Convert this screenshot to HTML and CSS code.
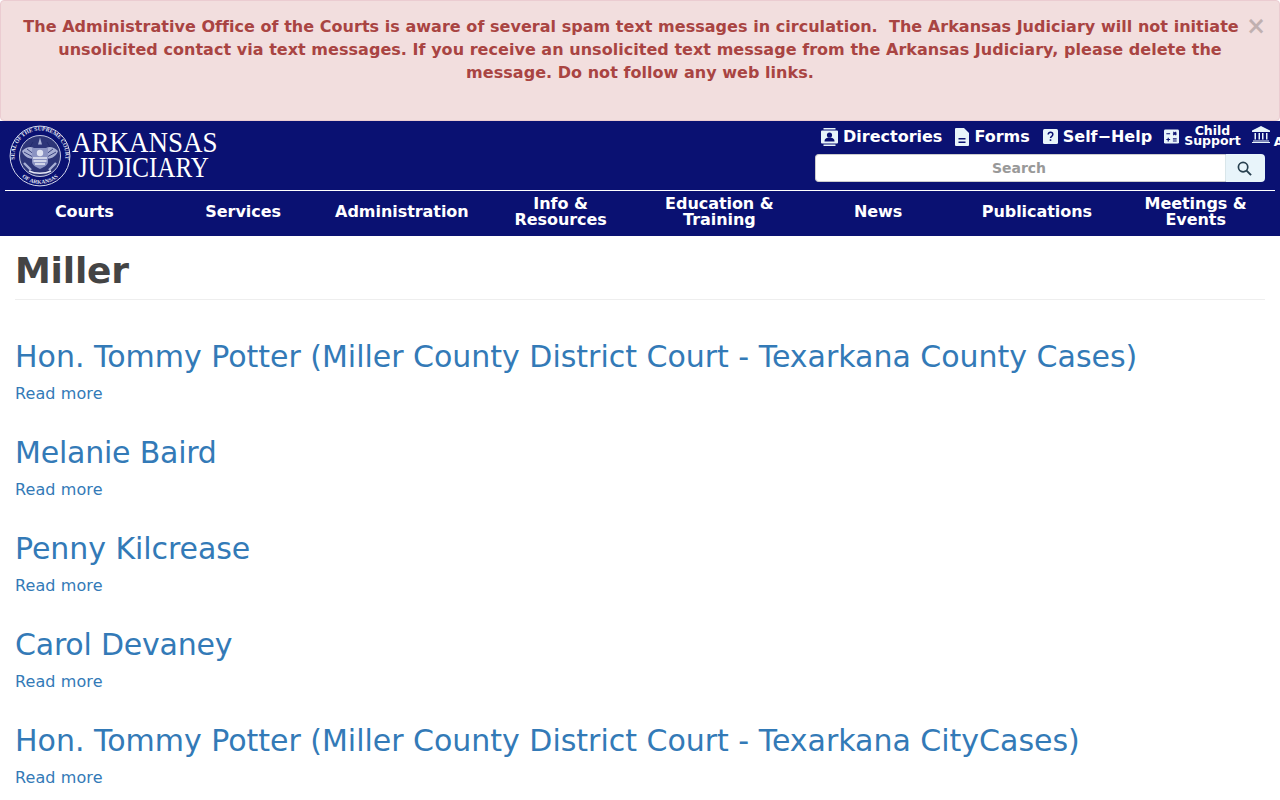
FILE: index.html
```html
<!DOCTYPE html>
<html lang="en">
<head>
<meta charset="utf-8">
<title>Miller | Arkansas Judiciary</title>
<link rel="stylesheet" href="styles.css">
</head>
<body>
<div class="alert">
  <button class="close" type="button">×</button>
  <p>The Administrative Office of the Courts is aware of several spam text messages in circulation.&nbsp; The Arkansas Judiciary will not initiate unsolicited contact via text messages. If you receive an unsolicited text message from the Arkansas Judiciary, please delete the message. Do not follow any web links.</p>
</div>
<header class="site-header">
  <div class="top">
    <a class="logo" href="#">
      <svg class="seal" viewBox="0 0 62 62" aria-hidden="true">
        <defs>
          <path id="ring-top" d="M12 48A25.500 25.500 0 1 1 50 48"/>
          <path id="ring-bottom" d="M14 53A27.800 27.800 0 0 0 48 53"/>
        </defs>
        <circle cx="31" cy="31" r="29.900" fill="#0a1172" stroke="#d5d9ec" stroke-width="1"/>
        <circle cx="31" cy="31" r="20.500" fill="#2d3578" stroke="#d5d9ec" stroke-width=".9"/>
        <text class="seal-text"><textPath href="#ring-top" startOffset="50%">SEAL OF THE SUPREME COURT</textPath></text>
        <text class="seal-text"><textPath href="#ring-bottom" startOffset="50%">OF ARKANSAS</textPath></text>
        <path d="M31 12.500l2 7h-4zM13 26c5-5 11-5 14-1l-1 8c-5 2-11-1-13-7zM49 26c-5-5-11-5-14-1l1 8c5 2 11-1 13-7z" fill="#a7aed4"/>
        <path d="M15 27l9 5M18 24l8 6M47 27l-9 5M44 24l-8 6M24 17l-3 5M38 17l3 5" stroke="#20286b" stroke-width=".8"/>
        <path d="M23 23h16v14c0 3-4 5-8 7-4-2-8-4-8-7z" fill="#8b93c2"/>
        <path d="M24 33h14M24.500 36h13M26 39h10" stroke="#e8eaf5" stroke-width="1.400"/>
        <circle cx="31" cy="28" r="3.200" fill="#dfe2f1"/>
        <path d="M15 38l7 7M47 38l-7 7" stroke="#a7aed4" stroke-width="2.400"/>
        <path d="M20 46c6 3 16 3 22 0" fill="none" stroke="#e4e7f4" stroke-width="1.400"/>
      </svg>
      <span class="wordmark"><span class="first">ARKANSAS</span><span class="second">JUDICIARY</span></span>
    </a>
    <div class="tools">
      <nav class="quick">
        <a href="#"><svg viewBox="0 0 17 18"><path fill="#e8f4fa" d="M2.500 0h12v1.500h-12zM1 2.500h15a1 1 0 0 1 1 1v11a1 1 0 0 1-1 1H1a1 1 0 0 1-1-1v-11a1 1 0 0 1 1-1zM2.500 16.500h12V18h-12z"/><circle cx="8.500" cy="7" r="2.600" fill="#0a1172"/><path fill="#0a1172" d="M3.500 13.500c0-3 2.200-4 5-4s5 1 5 4z"/></svg>Directories</a>
        <a href="#"><svg class="narrow" viewBox="0 0 14 18"><path fill="#e8f4fa" d="M1 0h8l5 5v12a1 1 0 0 1-1 1H1a1 1 0 0 1-1-1V1a1 1 0 0 1 1-1z"/><path fill="#0a1172" d="M3.500 10h7v1.500h-7zM3.500 13.500h7V15h-7z"/></svg>Forms</a>
        <a href="#"><svg class="square" viewBox="0 0 15 15"><rect width="15" height="15" rx="1.500" fill="#e8f4fa"/><path fill="none" stroke="#0a1172" stroke-width="1.500" d="M5.200 5.500C5.200 4 6.300 3.300 7.500 3.300S9.800 4 9.800 5.400c0 1.900-2.300 1.900-2.300 3.700"/><rect x="6.700" y="10.300" width="1.600" height="1.600" fill="#0a1172"/></svg>Self&#8722;Help</a>
        <a class="calc" href="#"><svg class="square" viewBox="0 0 16 15"><rect width="16" height="15" rx="1.500" fill="#e8f4fa"/><path stroke="#0a1172" stroke-width="1.200" d="M2.500 4.500h4M9.500 4.500h4M4.500 8.700v4M2.500 10.700h4M9.500 10h4M9.500 12.300h4M10 2.500l3 3.500M13 2.500l-3 3.500"/></svg><span class="stack">Child<br>Support</span></a>
        <a class="last" href="#"><svg class="bank" viewBox="0 0 18 17"><path fill="#e8f4fa" d="M9 0l9 4.500V6H0V4.500zM2.500 7h1.500v6.500H2.500zM6.500 7H8v6.500H6.500zM10 7h1.500v6.500H10zM14 7h1.500v6.500H14zM1 14.500h16v1H1zM0 16h18v1H0z"/></svg><span class="stack">AOC<br>Administration</span></a>
      </nav>
      <form class="search">
        <input type="text" placeholder="Search">
        <button type="button"><svg viewBox="0 0 16 16"><circle cx="6.500" cy="6.500" r="5" fill="none" stroke="#28404f" stroke-width="1.800"/><path d="M10.200 10.200L15 15" stroke="#28404f" stroke-width="2"/></svg></button>
      </form>
    </div>
  </div>
  <nav class="main-nav">
    <a href="#">Courts</a>
    <a href="#">Services</a>
    <a href="#">Administration</a>
    <a href="#">Info &amp; Resources</a>
    <a href="#">Education &amp; Training</a>
    <a href="#">News</a>
    <a href="#">Publications</a>
    <a href="#">Meetings &amp; Events</a>
  </nav>
</header>
<main class="content">
  <h1 class="page-title">Miller</h1>
  <article class="teaser"><h2><a href="#">Hon. Tommy Potter (Miller County District Court - Texarkana County Cases)</a></h2><a class="more" href="#">Read more</a></article>
  <article class="teaser"><h2 class="snug"><a href="#">Melanie Baird</a></h2><a class="more" href="#">Read more</a></article>
  <article class="teaser"><h2 class="slight"><a href="#">Penny Kilcrease</a></h2><a class="more" href="#">Read more</a></article>
  <article class="teaser"><h2 class="snug"><a href="#">Carol Devaney</a></h2><a class="more" href="#">Read more</a></article>
  <article class="teaser"><h2><a href="#">Hon. Tommy Potter (Miller County District Court - Texarkana CityCases)</a></h2><a class="more" href="#">Read more</a></article>
</main>
</body>
</html>
```
FILE: styles.css
```css
* { box-sizing: border-box; }
html, body { margin: 0; padding: 0; overflow: hidden; height: 800px; }
body { font-family: "DejaVu Sans", sans-serif; font-size: 16px; line-height: 1.5; color: #333; background: #fff; }
a { text-decoration: none; }

.alert { height: 121px; padding: 14px 15px 0; background: #f2dede; border: 1px solid #ebccd1; border-radius: 4px; color: #a94442; font-weight: 700; text-align: center; line-height: 23px; letter-spacing: .035px; }
.alert p { margin: 0; }
.close { float: right; width: 18px; height: 22px; padding: 0 4px 0 0; border: 0; background: none; font: 700 24px/22px "DejaVu Sans", sans-serif; text-align: center; color: #000; opacity: .2; }

.site-header { background: #0a1172; height: 115px; color: #fff; }
.top { display: flex; justify-content: space-between; height: 70px; margin: 0 5px; border-bottom: 1px solid #fff; }
.logo { display: flex; align-items: center; gap: 1px; height: 69px; padding: 0 0 0 4px; color: #fff; }
.seal { width: 62px; height: 62px; flex: none; }
.seal-text { font: 700 5.600px "Liberation Serif", serif; fill: #e4e7f4; text-anchor: middle; }
.wordmark { display: flex; flex-direction: column; width: 150px; padding-bottom: 3px; font-family: "Liberation Serif", serif; line-height: 25px; font-size: 30px; white-space: nowrap; }
.first { transform: scaleX(.9); transform-origin: left center; }
.second { padding-left: 6px; transform: scaleX(.835); transform-origin: 6px center; }

.tools { width: 465px; flex: none; overflow: hidden; margin-right: -5px; }
.quick { display: flex; height: 31px; margin-bottom: 2px; align-items: center; gap: 13px; padding-left: 6px; white-space: nowrap; }
.quick a { display: flex; align-items: center; gap: 5px; color: #fff; font-weight: 700; font-size: 16px; line-height: 20px; }
.quick a.calc { margin-left: -1px; }
.quick a.last { gap: 4px; margin-left: -2px; }
.quick svg { width: 17px; height: 18px; flex: none; }
.quick svg.narrow { width: 14px; }
.quick svg.square { width: 15px; height: 15px; }
.quick svg.bank { width: 18px; height: 17px; margin-top: -5px; }
.stack { font-size: 12.500px; line-height: 10px; text-align: center; margin-top: -2px; }
.last .stack { margin-top: 0; }

.search { display: flex; width: 450px; height: 28px; }
.search input { flex: 1; min-width: 0; height: 28px; border: 1px solid #ccc; border-right-color: #d9e6ea; border-radius: 4px 0 0 4px; background: #fff; text-align: center; font: 700 14px "DejaVu Sans", sans-serif; padding: 0 3px 0 0; }
.search input::placeholder { color: #999; opacity: 1; }
.search button { width: 39px; height: 28px; display: flex; align-items: center; justify-content: center; border: 0; border-radius: 0 4px 4px 0; background: #e8f4fa; padding: 0 2px 0 0; }
.search svg { width: 15px; height: 15px; }

.main-nav { display: grid; grid-template-columns: repeat(8, minmax(0, 1fr)); height: 45px; padding: 0 5px 3px; align-items: center; }
.main-nav a { color: #fff; font-weight: 700; line-height: 16px; text-align: center; padding: 0 10px; letter-spacing: -.05px; }

.content { padding: 0 15px; }
.page-title { margin: 15px 0 0; font-size: 36px; line-height: 40px; font-weight: 700; letter-spacing: -.2px; color: #444; border-bottom: 1px solid #eee; height: 49px; }
.teaser { height: 96px; }
.teaser h2 { margin: 0; font-size: 30px; line-height: 34px; font-weight: 400; padding-top: 40px; letter-spacing: -.015px; }
.teaser h2.snug { letter-spacing: -.22px; }
.teaser h2.slight { letter-spacing: -.07px; }
.teaser a { color: #337ab7; }
.more { display: block; line-height: 24px; margin-top: 8px; letter-spacing: .1px; }
```
